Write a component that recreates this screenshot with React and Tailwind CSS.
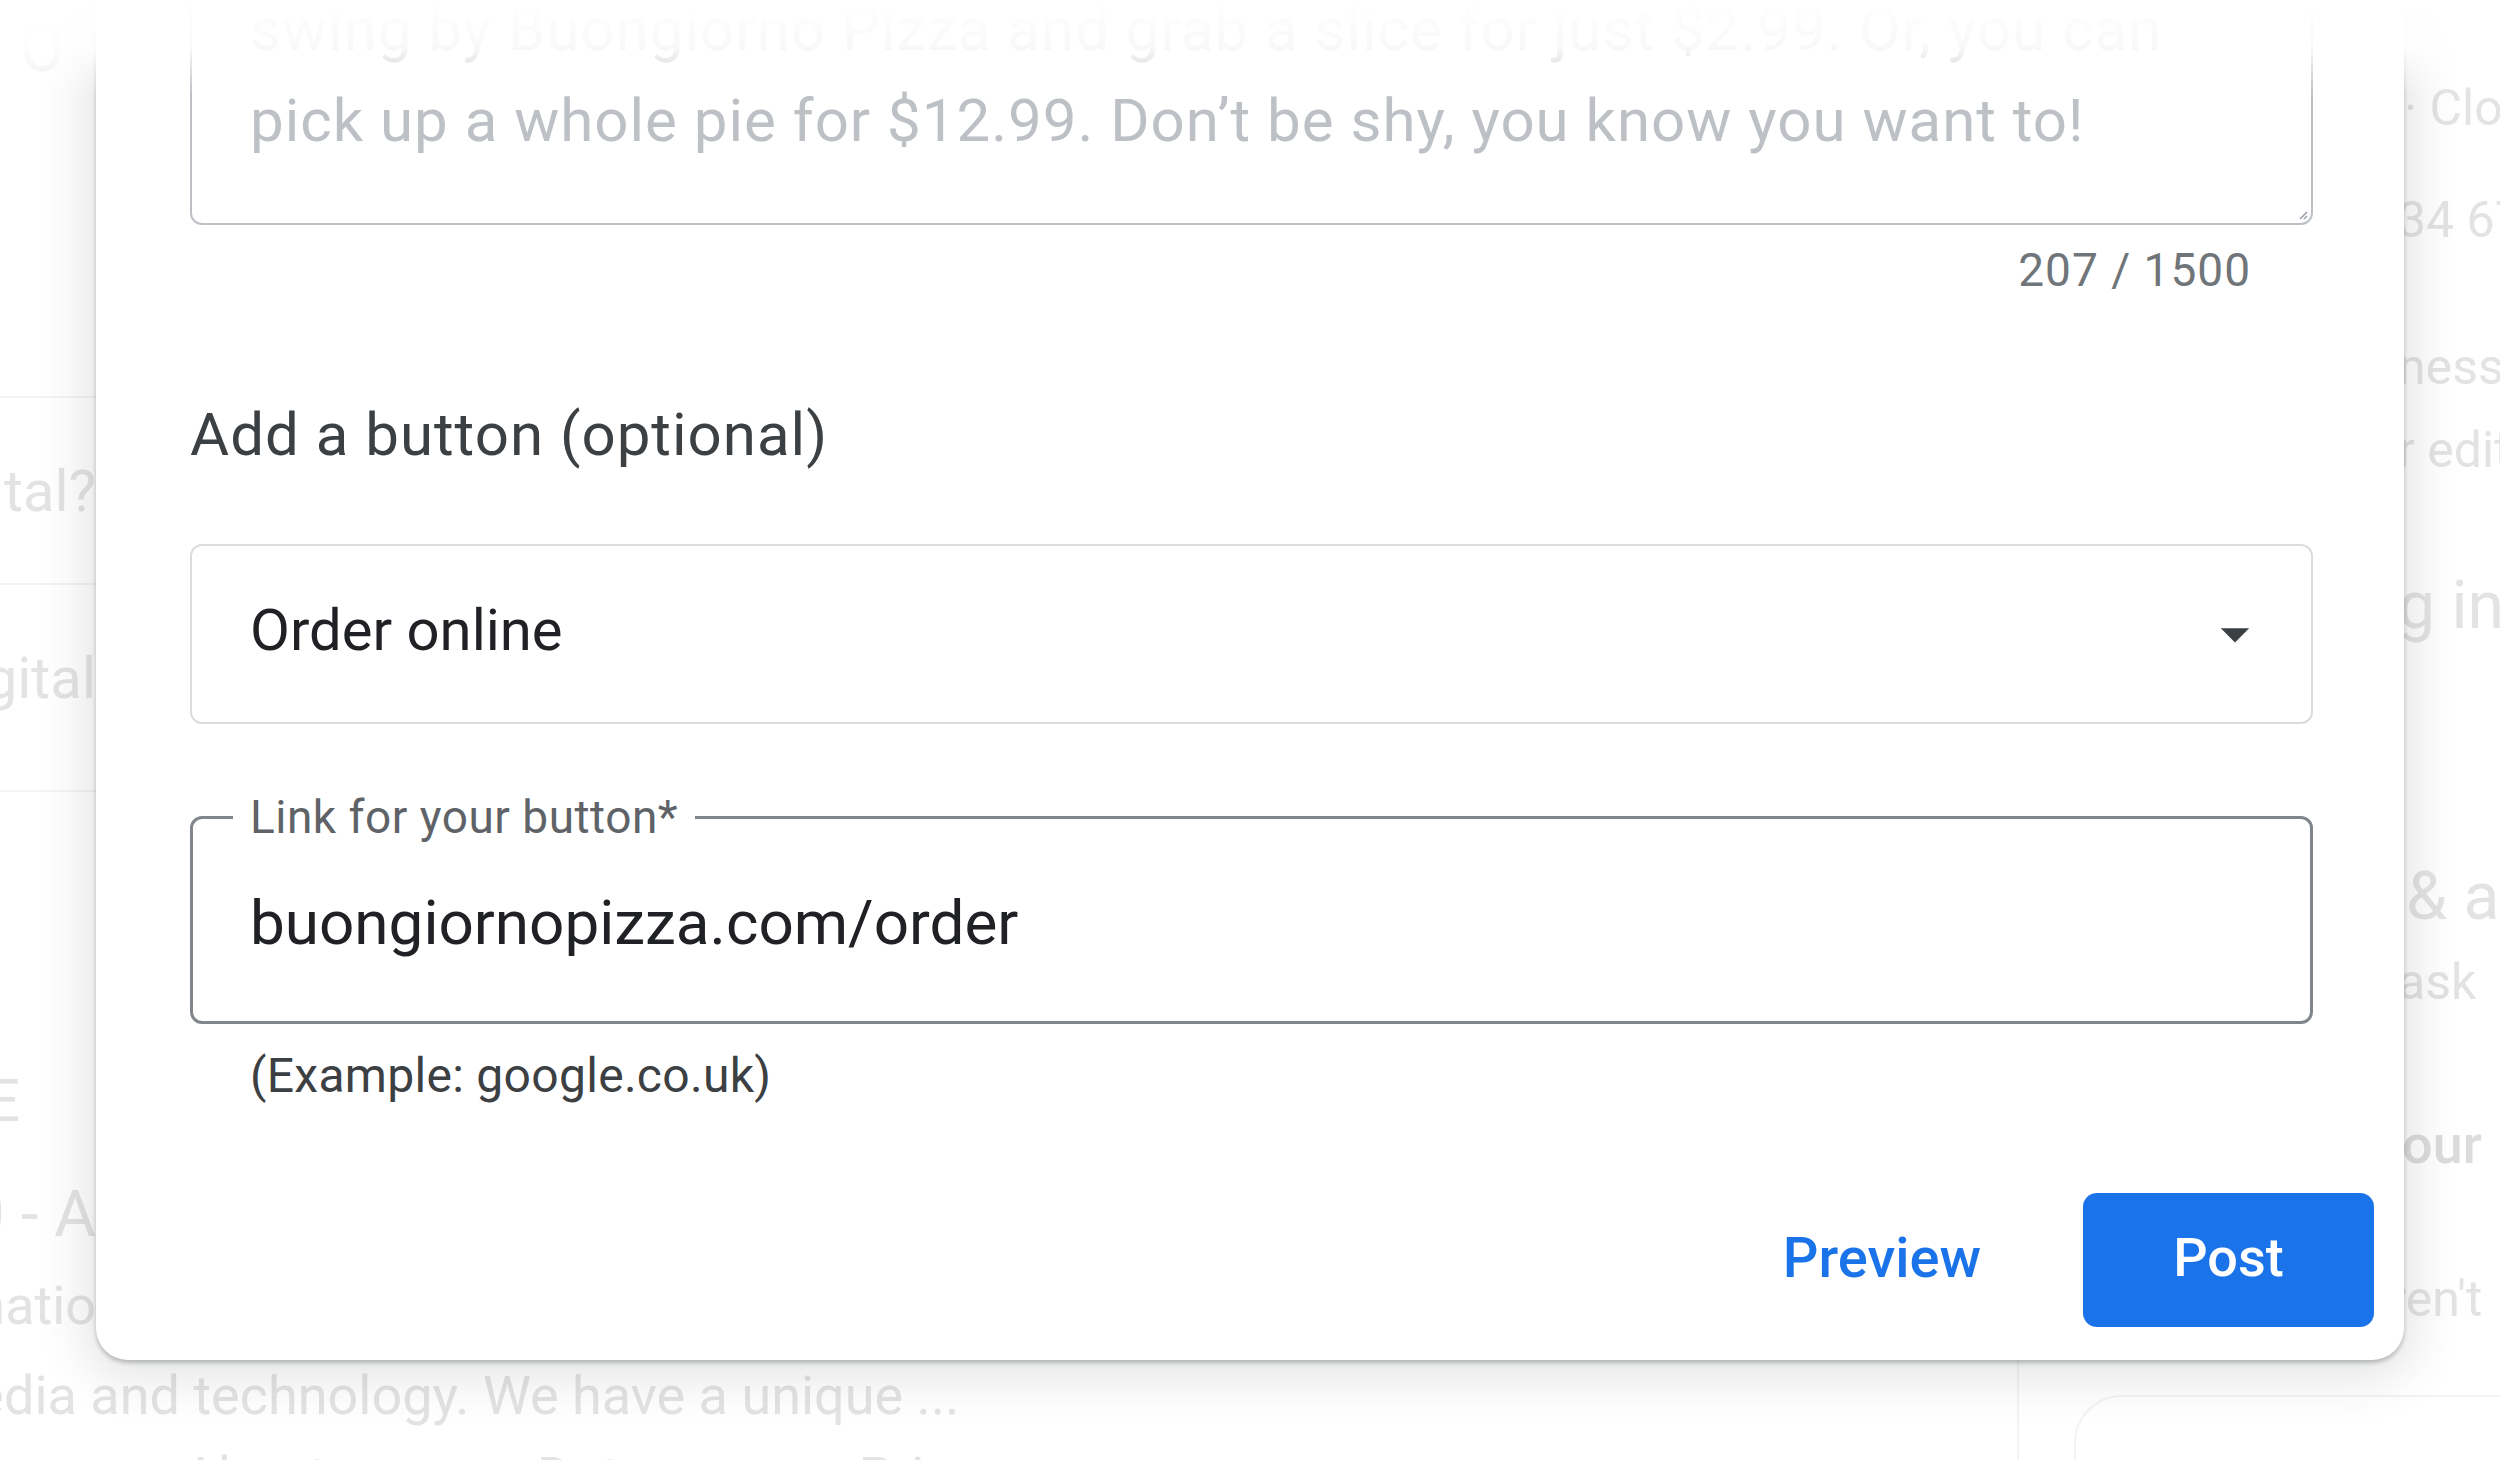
import React from "react";

const faint = "text-[#e3e3e3]";

function BackgroundPage() {
  return (
    <div className="absolute inset-0 flex">
      {/* main column of the page behind the dialog */}
      <div className="w-[2017px] shrink-0">
        <div className="h-[398px] w-[96px] overflow-hidden border-b-2 border-[#f3f3f3]">
          <div className={`pl-[20px] pt-[10px] text-[64px] leading-[80px] ${faint} opacity-60`}>O</div>
        </div>
        <div className="flex h-[187px] w-[96px] items-center justify-end overflow-hidden border-b-2 border-[#f3f3f3]">
          <span className={`whitespace-nowrap text-[58px] leading-none ${faint}`}>Is it digital?</span>
        </div>
        <div className="flex h-[207px] w-[96px] items-center justify-end overflow-hidden border-b-2 border-[#f3f3f3]">
          <span className={`mt-[-20px] whitespace-nowrap text-[58px] leading-none ${faint}`}>Go digital</span>
        </div>
        <div className="h-[378px] w-[96px] overflow-hidden pt-[279px]">
          <span className={`ml-[-14px] text-[60px] leading-none ${faint}`}>E</span>
        </div>
        <div className="flex h-[90px] w-[96px] items-center justify-end overflow-hidden">
          <span className={`whitespace-nowrap text-[64px] leading-none ${faint}`}>2020 - A</span>
        </div>
        <div className="flex h-[92px] w-[126px] items-center justify-end overflow-hidden">
          <span className={`whitespace-nowrap text-[54px] leading-none ${faint}`}>Information</span>
        </div>
        <div className="ml-[-72px] flex h-[88px] items-center">
          <span className={`whitespace-nowrap text-[54px] leading-none ${faint}`}>
            media and technology. We have a unique ...
          </span>
        </div>
        <div className={`flex gap-[210px] pl-[183px] pt-[10px] text-[54px] leading-none ${faint}`}>
          <span>About</span>
          <span>Data</span>
          <span>Privacy</span>
        </div>
      </div>

      {/* right column */}
      <div className="relative flex-1 overflow-hidden border-l-2 border-[#f3f3f3]">
        <div className={`flex flex-col pl-[379px] ${faint} whitespace-nowrap`}>
          <span className="mt-[80px] ml-[6px] text-[50px] leading-[56px]">· Closes 10 pm</span>
          <span className="mt-[56px] text-[50px] leading-[56px]">34 6789 0000</span>
          <span className="mt-[91px] text-[50px] leading-[56px]">ness</span>
          <span className="mt-[27px] text-[50px] leading-[56px]">r editors</span>
          <span className="mt-[90px] text-[66px] leading-[76px]">g info</span>
          <span className="mt-[215px] ml-[8px] text-[66px] leading-[76px]">&amp; answers</span>
          <span className="mt-[19px] text-[50px] leading-[56px]">ask</span>
          <span className="mt-[105px] ml-[-22px] text-[54px] font-medium leading-[60px] text-[#dcdcdc]">your</span>
          <span className="mt-[96px] ml-[-36px] text-[50px] leading-[56px]">aren't</span>
        </div>
        <div className="absolute left-[55px] top-[1395px] h-[200px] w-[600px] rounded-[48px] border-2 border-[#f3f3f3]" />
      </div>
    </div>
  );
}

function ComposeDialog() {
  return (
    <div className="absolute left-[96px] top-[-260px] flex w-[2308px] flex-col rounded-[32px] bg-white shadow-[0_3px_4px_rgba(60,64,67,0.3),0_8px_48px_10px_rgba(60,64,67,0.14)]">
      <div className="flex flex-col pl-[94px] pr-[91px] pt-[60px]">
        {/* description textarea */}
        <div className="relative rounded-[12px] border-2 border-[#bdc1c6] pb-[57px] pl-[58px] text-[60px] leading-[91px] tracking-[1px] text-[#bdc1c6]">
          <div className="whitespace-nowrap">It's National Pizza Day and we're celebrating! Come in</div>
          <div className="whitespace-nowrap">today and treat yourself to our famous margherita. Just</div>
          <div className="whitespace-nowrap">swing by Buongiorno Pizza and grab a slice for just $2.99. Or, you can</div>
          <div className="whitespace-nowrap">pick up a whole pie for $12.99. Don’t be shy, you know you want to!</div>
          <svg className="absolute bottom-[3px] right-[3px] h-[12px] w-[12px]" viewBox="0 0 12 12">
            <path d="M11 4 L4 11 M11 8 L8 11" stroke="#9aa0a6" strokeWidth="1.5" />
          </svg>
        </div>
        <div className="mt-[17px] pr-[62px] text-right text-[46px] leading-[56px] tracking-[1px] text-[#70757a]">
          207 / 1500
        </div>

        <h2 className="mt-[99px] text-[60px] font-normal leading-[76px] tracking-[1px] text-[#3c4043]">
          Add a button (optional)
        </h2>

        {/* button type select */}
        <div className="mt-[71px] flex h-[180px] items-center justify-between rounded-[12px] border-2 border-[#dadce0] pb-[8px] pl-[58px] pr-[42px]">
          <span className="text-[58px] leading-none text-[#202124]">Order online</span>
          <svg className="mt-[8px] h-[68px] w-[68px]" viewBox="0 0 24 24">
            <path d="M7 10l5 5 5-5z" fill="#3c4043" />
          </svg>
        </div>

        {/* link input */}
        <div className="relative mt-[92px] flex h-[208px] items-center rounded-[12px] border-[3px] border-[#80868b] pl-[57px] pt-[6px]">
          <span className="absolute left-[40px] top-[-30px] bg-white px-[17px] text-[46px] leading-[56px] tracking-[0.5px] text-[#5f6368]">
            Link for your button*
          </span>
          <span className="text-[62px] leading-none text-[#202124]">buongiornopizza.com/order</span>
        </div>
        <div className="mt-[24px] pl-[60px] text-[48px] leading-[56px] tracking-[0.3px] text-[#3c4043]">
          (Example: google.co.uk)
        </div>
      </div>

      {/* actions */}
      <div className="mt-[89px] flex items-center justify-end gap-[62px] pb-[33px] pr-[30px]">
        <button className="h-[134px] px-[40px] pb-[4px] text-[56px] font-medium leading-none text-[#1a73e8]">
          Preview
        </button>
        <button className="h-[134px] w-[291px] rounded-[14px] bg-[#1a73e8] pb-[4px] text-[54px] font-medium leading-none text-white">
          Post
        </button>
      </div>
    </div>
  );
}

export default function App() {
  return (
    <div className="relative h-[1460px] w-[2500px] overflow-hidden bg-white font-['Roboto',sans-serif]">
      <BackgroundPage />
      <ComposeDialog />
      <div className="pointer-events-none absolute inset-x-0 top-0 h-[95px] bg-gradient-to-b from-white via-white/90 to-transparent" />
    </div>
  );
}
